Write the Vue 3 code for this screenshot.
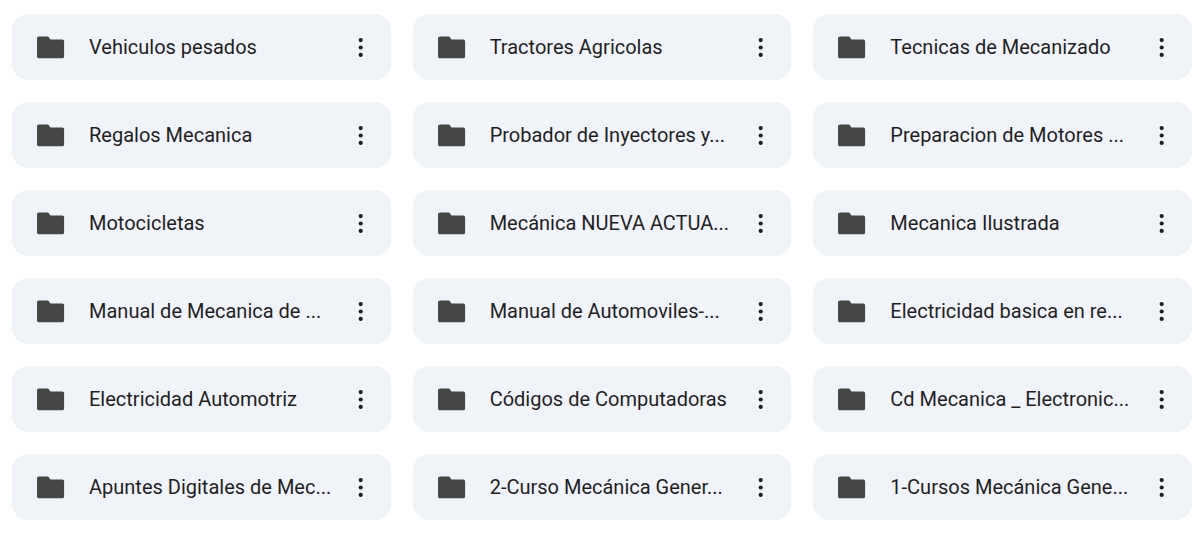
<script setup>
import { ref } from "vue";

const folders = ref([
    "Vehiculos pesados",
    "Tractores Agricolas",
    "Tecnicas de Mecanizado",
    "Regalos Mecanica",
    "Probador de Inyectores y...",
    "Preparacion de Motores ...",
    "Motocicletas",
    "Mecánica NUEVA ACTUA...",
    "Mecanica Ilustrada",
    "Manual de Mecanica de ...",
    "Manual de Automoviles-...",
    "Electricidad basica en re...",
    "Electricidad Automotriz",
    "Códigos de Computadoras",
    "Cd Mecanica _ Electronic...",
    "Apuntes Digitales de Mec...",
    "2-Curso Mecánica Gener...",
    "1-Cursos Mecánica Gene...",
]);
</script>

<template>
    <ul class="folders">
        <li v-for="name in folders" :key="name" class="folder">
            <svg class="icon" viewBox="0 0 24 24" aria-hidden="true">
                <path
                    d="M9.8 4H3.7C2.7 4 2.2 4.6 2.2 5.5V18.4C2.2 19.4 2.7 19.9 3.7 19.9H20.4C21.4 19.9 21.9 19.4 21.9 18.4V7.7C21.9 6.7 21.4 6.2 20.4 6.2H12L10.6 4.4C10.4 4.1 10.2 4 9.8 4Z"
                />
            </svg>
            <span class="name">{{ name }}</span>
            <button class="more" type="button" :aria-label="name">
                <svg viewBox="0 0 33 33" aria-hidden="true">
                    <circle cx="16.7" cy="9.1" r="2.1" />
                    <circle cx="16.7" cy="16.5" r="2.1" />
                    <circle cx="16.7" cy="23.9" r="2.1" />
                </svg>
            </button>
        </li>
    </ul>
</template>

<style>
body {
    background: #fff;
}
</style>

<style scoped>
.folders {
    display: grid;
    grid-template-columns: repeat(3, minmax(0, 1fr));
    gap: 22px;
    margin: 0;
    padding: 14px 8px 14px 12px;
    list-style: none;
    font-family: Roboto, "Liberation Sans", sans-serif;
    font-size: 20px;
    line-height: 24px;
    color: #1f1f1f;
}
.folder {
    display: flex;
    align-items: center;
    box-sizing: border-box;
    min-height: 66px;
    padding: 0 14px 0 22px;
    border-radius: 16px;
    background: #f0f3f8;
}
.icon {
    flex: none;
    width: 33px;
    height: 33px;
    margin-right: 22px;
    fill: #444746;
}
.name {
    flex: 1;
    min-width: 0;
    overflow: hidden;
    white-space: nowrap;
    text-overflow: ellipsis;
}
.more {
    flex: none;
    width: 33px;
    height: 33px;
    padding: 0;
    border: 0;
    border-radius: 50%;
    background: none;
    cursor: pointer;
}
.more:hover {
    background: #e1e5ea;
}
.more svg {
    display: block;
    width: 100%;
    height: 100%;
    fill: #1f1f1f;
}
</style>
